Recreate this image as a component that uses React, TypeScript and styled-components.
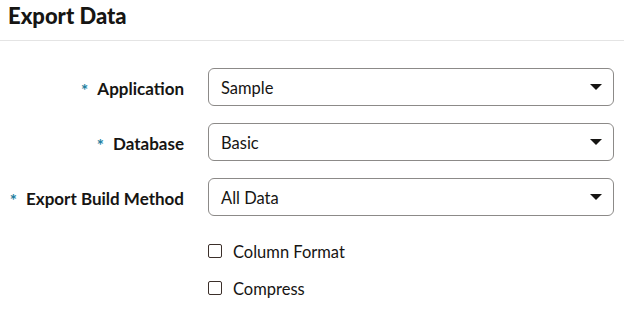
import * as React from 'react'
import styled, { createGlobalStyle } from 'styled-components'

const GlobalStyle = createGlobalStyle`
  html, body {
    margin: 0;
    padding: 0;
    background: #fff;
  }
  body {
    font-family: Lato, 'Noto Sans', 'Liberation Sans', sans-serif;
    color: #161513;
  }
`

const Page = styled.div`
  width: 624px;
  height: 316px;
  overflow: hidden;
`

const Header = styled.header`
  height: 41px;
  box-sizing: border-box;
  padding: 2px 8px 0;
  border-bottom: 1px solid #e4e4e4;
`

const Title = styled.h1`
  margin: 0;
  font-size: 22px;
  font-weight: 900;
  line-height: 28px;
  letter-spacing: 0;
`

const Form = styled.div`
  display: grid;
  grid-template-columns: 184px 406px;
  column-gap: 24px;
  row-gap: 17px;
  padding-top: 27px;
  align-items: center;
`

const Label = styled.label`
  justify-self: end;
  font-size: 17px;
  font-weight: 700;
  display: flex;
  align-items: center;
  gap: 9px;
  padding-top: 2px;
`

const Required = styled.span`
  color: #227e9e;
  font-size: 17px;
  font-weight: 700;
  line-height: 1;
  padding-top: 4px;
`

const Select = styled.div`
  height: 38px;
  box-sizing: border-box;
  border: 1px solid #8c8a88;
  border-radius: 6px;
  display: flex;
  align-items: center;
  justify-content: space-between;
  padding: 2px 11px 0 12px;
  font-size: 16.5px;
`

const Caret = styled.span`
  width: 0;
  height: 0;
  margin-top: -2px;
  border-left: 6px solid transparent;
  border-right: 6px solid transparent;
  border-top: 6px solid #161513;
`

const Options = styled.div`
  grid-column: 2;
  display: flex;
  flex-direction: column;
  gap: 21px;
  padding-top: 10px;
`

const CheckRow = styled.label`
  display: flex;
  align-items: center;
  gap: 11px;
  font-size: 16.5px;
  height: 16px;
`

const Box = styled.span`
  width: 14px;
  height: 14px;
  box-sizing: border-box;
  border: 1.5px solid #3b2f2a;
  border-radius: 2px;
`

const Text = styled.span`
  padding-top: 2px;
`

const fields = [
  { label: 'Application', value: 'Sample' },
  { label: 'Database', value: 'Basic' },
  { label: 'Export Build Method', value: 'All Data' },
]

export default function App() {
  return (
    <Page>
      <GlobalStyle />
      <Header>
        <Title>Export Data</Title>
      </Header>
      <Form>
        {fields.map((f) => (
          <React.Fragment key={f.label}>
            <Label>
              <Required>*</Required>
              {f.label}
            </Label>
            <Select>
              <span>{f.value}</span>
              <Caret />
            </Select>
          </React.Fragment>
        ))}
        <Options>
          <CheckRow>
            <Box />
            <Text>Column Format</Text>
          </CheckRow>
          <CheckRow>
            <Box />
            <Text>Compress</Text>
          </CheckRow>
        </Options>
      </Form>
    </Page>
  )
}
